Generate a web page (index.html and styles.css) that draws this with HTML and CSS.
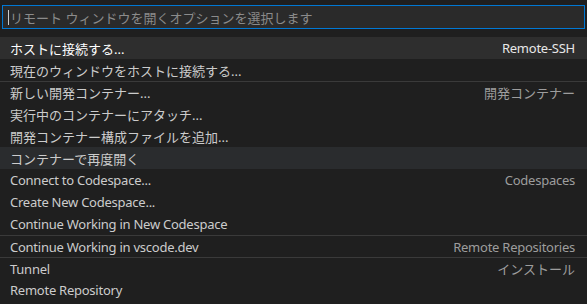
FILE: index.html
```html
<!DOCTYPE html>
<html lang="ja">
<head>
  <meta charset="UTF-8">
  <title>リモート ウィンドウを開く</title>
  <link rel="stylesheet" href="styles.css">
</head>
<body>
  <div class="quick-input">
    <div class="search">
      <span class="caret"></span><span class="placeholder">リモート ウィンドウを開くオプションを選択します</span>
    </div>
    <ul class="list">
      <li class="row focused"><span class="label">ホストに接続する...</span><span class="detail en">Remote-SSH</span></li>
      <li class="row"><span class="label">現在のウィンドウをホストに接続する...</span></li>
      <li class="row sep"><span class="label">新しい開発コンテナー...</span><span class="detail">開発コンテナー</span></li>
      <li class="row"><span class="label">実行中のコンテナーにアタッチ...</span></li>
      <li class="row"><span class="label">開発コンテナー構成ファイルを追加...</span></li>
      <li class="row hover"><span class="label">コンテナーで再度開く</span></li>
      <li class="row"><span class="label en">Connect to Codespace...</span><span class="detail en">Codespaces</span></li>
      <li class="row"><span class="label en">Create New Codespace...</span></li>
      <li class="row"><span class="label en">Continue Working in New Codespace</span></li>
      <li class="row sep"><span class="label en">Continue Working in vscode.dev</span><span class="detail en">Remote Repositories</span></li>
      <li class="row sep"><span class="label en">Tunnel</span><span class="detail">インストール</span></li>
      <li class="row"><span class="label en">Remote Repository</span></li>
    </ul>
  </div>
</body>
</html>
```

FILE: styles.css
```css
* {
  padding: 0;
  margin: 0;
  box-sizing: border-box;
}
body {
  width: 587px;
  height: 304px;
  overflow: hidden;
  background-color: #1f1f1f;
  color: #cccccc;
  font-family: "Noto Sans", "Noto Sans CJK JP", sans-serif;
  font-size: 13px;
}
.quick-input {
  padding-top: 5px;
}
.search {
  display: flex;
  align-items: center;
  height: 24px;
  margin: 0 2px;
  padding-left: 5px;
  border: 1px solid #0078d4;
  background-color: #2a2a2a;
}
.caret {
  width: 1px;
  height: 15px;
  background-color: #cccccc;
  margin-right: 1px;
}
.placeholder {
  color: #8b8b8b;
  font-size: 13px;
}
.list {
  list-style: none;
  margin-top: 8px;
}
.row {
  display: flex;
  justify-content: space-between;
  align-items: center;
  height: 22px;
  padding: 0 12px 0 10px;
  white-space: nowrap;
}
.row.sep {
  border-top: 1px solid #3a3a3a;
}
.row.focused {
  background-color: #2e2e2e;
  color: #ffffff;
}
.row.hover {
  background-color: #2a2c2e;
}
.en {
  letter-spacing: -0.25px;
}
.detail {
  color: #9d9d9d;
}
.row.focused .detail {
  color: #e8e8e8;
}
```
